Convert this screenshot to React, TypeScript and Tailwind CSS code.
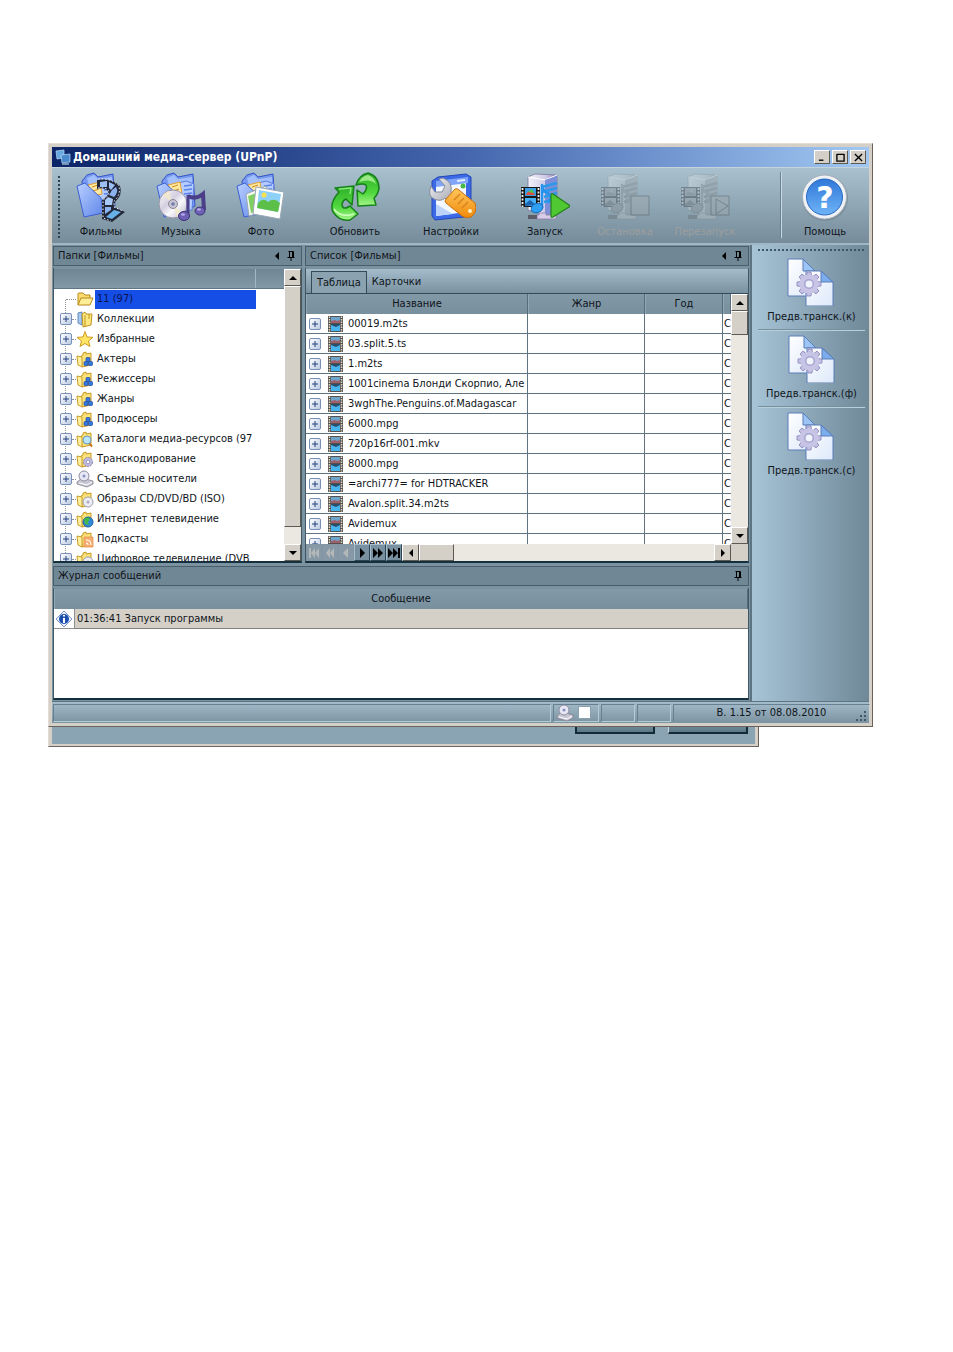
import React from 'react';

type Kind =
  | 'open' | 'collection' | 'star' | 'cubes' | 'search' | 'gear' | 'drive' | 'disc' | 'globe' | 'rss';

const treeItems: { label: string; kind: Kind }[] = [
  { label: '11 (97)', kind: 'open' },
  { label: 'Коллекции', kind: 'collection' },
  { label: 'Избранные', kind: 'star' },
  { label: 'Актеры', kind: 'cubes' },
  { label: 'Режиссеры', kind: 'cubes' },
  { label: 'Жанры', kind: 'cubes' },
  { label: 'Продюсеры', kind: 'cubes' },
  { label: 'Каталоги медиа-ресурсов (97', kind: 'search' },
  { label: 'Транскодирование', kind: 'gear' },
  { label: 'Съемные носители', kind: 'drive' },
  { label: 'Образы CD/DVD/BD (ISO)', kind: 'disc' },
  { label: 'Интернет телевидение', kind: 'globe' },
  { label: 'Подкасты', kind: 'rss' },
  { label: 'Цифровое телевидение (DVB', kind: 'disc' },
];

const files = [
  '00019.m2ts',
  '03.split.5.ts',
  '1.m2ts',
  '1001cinema Блонди Скорпио, Але',
  '3wghThe.Penguins.of.Madagascar',
  '6000.mpg',
  '720p16rf-001.mkv',
  '8000.mpg',
  '=archi777= for HDTRACKER',
  'Avalon.split.34.m2ts',
  'Avidemux',
  'Avidemux',
];

function Gradients() {
  return (
    <svg className="absolute h-0 w-0" aria-hidden="true">
      <defs>
        <linearGradient id="folder" x1="0" y1="0" x2="1" y2="1">
          <stop offset="0" stopColor="#b9d0ff" />
          <stop offset="1" stopColor="#5f86ea" />
        </linearGradient>
        <linearGradient id="green" x1="0" y1="0" x2="0" y2="1">
          <stop offset="0" stopColor="#2fae2a" />
          <stop offset="0.6" stopColor="#4fd83c" />
          <stop offset="1" stopColor="#a6f58c" />
        </linearGradient>
        <linearGradient id="steel" x1="0" y1="0" x2="1" y2="1">
          <stop offset="0" stopColor="#f6f6f8" />
          <stop offset="1" stopColor="#9a9ca8" />
        </linearGradient>
        <linearGradient id="orange" x1="0" y1="0" x2="0" y2="1">
          <stop offset="0" stopColor="#ffc65a" />
          <stop offset="1" stopColor="#f08a0c" />
        </linearGradient>
        <linearGradient id="disc" x1="0" y1="0" x2="1" y2="1">
          <stop offset="0" stopColor="#ffffff" />
          <stop offset="0.4" stopColor="#d4cfe0" />
          <stop offset="0.6" stopColor="#f8f8fc" />
          <stop offset="1" stopColor="#b8b4c8" />
        </linearGradient>
        <linearGradient id="tower" x1="0" y1="0" x2="1" y2="0">
          <stop offset="0" stopColor="#f4f2fa" />
          <stop offset="0.6" stopColor="#cfcbe6" />
          <stop offset="1" stopColor="#8d86bd" />
        </linearGradient>
        <linearGradient id="help" x1="0" y1="0" x2="0" y2="1">
          <stop offset="0" stopColor="#2f78d8" />
          <stop offset="1" stopColor="#6fb4f8" />
        </linearGradient>
        <linearGradient id="sheet" x1="0" y1="0" x2="1" y2="1">
          <stop offset="0" stopColor="#ffffff" />
          <stop offset="1" stopColor="#dce8fa" />
        </linearGradient>
      </defs>
    </svg>
  );
}

function BlueFolder() {
  return (
    <g strokeLinejoin="round">
      <path d="M6 9 L11 3 L18 1 L22 5 L37 2 L39 34 L26 41 L8 44Z" fill="#7799f0" stroke="#3454c4" />
      <path d="M11 6 L18 3 L22 7 L36 5 L37 34 L20 38Z" fill="#a2bffc" />
      <path d="M12 14 L30 9 L38 12 L36 38 L16 40Z" fill="#b4ccff" stroke="#5a7ce4" />
      <path d="M12 13 L24 10 L26 22 L16 24Z" fill="#ffe9a0" stroke="#e0a030" />
      <path d="M16 15 L22 13 M17 19 L23 17" stroke="#d08a20" />
      <path d="M28 14 L36 13 M28 18 L36 17 M28 22 L36 21" stroke="#5a82e8" strokeWidth="1.500" />
      <path d="M1 14 L9 11 L25 26 L27 41 L8 45Z" fill="url(#folder)" stroke="#3f60d0" />
    </g>
  );
}

function FilmsIcon() {
  return (
    <svg viewBox="0 0 50 50" className="size-[50px]" strokeLinejoin="round">
      <BlueFolder />
      <path d="M21 8 Q35 5 44 14 Q47 23 39 30 L38 35 L49 40 L36 50 L26 47 V28 Q34 23 32 19 Q28 15 21 17Z" fill="#22283a" />
      <path d="M24 10 L31 9 V15 L24 15Z" fill="#9cc0f4" />
      <path d="M33 10 L39 13 L35 18 L33 16Z" fill="#9cc0f4" />
      <path d="M40 15 Q43 20 38 25 L33 23 Q35 20 36 18Z" fill="#8cb0ec" />
      <path d="M32 25 L37 27 L36 33 H29 V28Z" fill="#a8c8f8" />
      <path d="M29 35 H35 V38 L29 42Z" fill="#8cb4f0" />
      <path d="M30 45 L38 38 L45 40 L36 47Z" fill="#68b0e8" />
      <path d="M22 7 Q36 6 43 14 Q45 23 38 29 V35 L47 39" fill="none" stroke="#f0f2f8" strokeDasharray="1.500 2" />
      <path d="M22 16 Q30 15 33 19 Q33 24 27 28 V46 L35 49" fill="none" stroke="#f0f2f8" strokeDasharray="1.500 2" />
    </svg>
  );
}

function MusicIcon() {
  return (
    <svg viewBox="0 0 50 50" className="size-[50px]">
      <BlueFolder />
      <circle cx="17" cy="32" r="14" fill="url(#disc)" stroke="#9a96a8" />
      <path d="M17 32 L7 23 A14 14 0 0 1 13 19Z M17 32 L27 42 A14 14 0 0 1 21 45Z" fill="#f3e9c8" opacity=".8" />
      <circle cx="17" cy="32" r="4.500" fill="#c8c4d4" stroke="#8a8698" />
      <circle cx="17" cy="32" r="1.800" fill="#6e7ea8" />
      <path d="M32 24 Q40 28 47 22 L48 38" fill="none" stroke="#4a3f88" strokeWidth="4" />
      <path d="M32 23 L32 43" stroke="#4a3f88" strokeWidth="3" />
      <ellipse cx="28" cy="44" rx="5.500" ry="4.500" fill="#6d5fb4" stroke="#3e3478" />
      <ellipse cx="44" cy="39" rx="5" ry="4" fill="#6d5fb4" stroke="#3e3478" />
      <ellipse cx="27" cy="42.500" rx="2" ry="1.300" fill="#b4a8e8" />
      <ellipse cx="43" cy="37.500" rx="2" ry="1.200" fill="#b4a8e8" />
    </svg>
  );
}

function PhotoIcon() {
  return (
    <svg viewBox="0 0 50 50" className="size-[50px]">
      <BlueFolder />
      <path d="M10 22 L30 14 L34 38 L13 44Z" fill="#f4f6f4" stroke="#98a8b0" />
      <path d="M12 24 L30 18 L32 36 L15 41Z" fill="#7fd060" />
      <path d="M20 15 L48 20 L44 47 L17 42Z" fill="#fff" stroke="#9aa8b4" />
      <path d="M23 18 L45 22 L42 40 L21 36Z" fill="#8fd0f8" />
      <path d="M22 31 Q27 25 32 30 Q38 25 44 31 L42 40 L21 36Z" fill="#5cc048" />
      <circle cx="28" cy="23" r="2.500" fill="#ffe24a" />
    </svg>
  );
}

function RefreshIcon() {
  return (
    <svg viewBox="0 0 50 50" className="size-[50px]" strokeLinejoin="round">
      <path d="M24 14 L5 16 L9 20 Q-1 31 3 40 Q10 50 20 48 L28 42 L20 34 Q12 39 12 32 Q13 28 16 27 L22 33Z" fill="url(#green)" stroke="#16801a" strokeWidth="1.500" />
      <path d="M26 13 Q29 3 38 1 Q49 4 49 17 Q47 24 44 26 L46 33 L28 34 L27 18 L33 22 Q38 17 36 13 Q33 11 26 13Z" fill="url(#green)" stroke="#16801a" strokeWidth="1.500" />
      <path d="M29 10 Q32 4 38 3 Q44 5 46 12 Q40 6 29 10Z" fill="#b4f59c" opacity=".8" />
      <path d="M4 37 Q10 46 24 42" fill="none" stroke="#d0ffc0" strokeWidth="1.500" />
      <path d="M9 17 L21 16 L20 22" fill="none" stroke="#86e878" strokeWidth="1.500" />
    </svg>
  );
}

function SettingsIcon() {
  return (
    <svg viewBox="0 0 50 50" className="size-[50px]" strokeLinejoin="round">
      <path d="M6 9 L12 5 L40 2 L45 5 L45 41 L38 45 L9 48 L6 44Z" fill="#3c6ae6" stroke="#2448b8" />
      <path d="M10 12 L40 8 L40 40 L10 44Z" fill="#f4f8ff" />
      <path d="M10 9 L42 5 L42 11 L10 15Z" fill="#7fa4f8" />
      <path d="M31 9 L39 8" stroke="#e0ecff" strokeWidth="2" />
      <path d="M10 32 L27 42 L10 44Z" fill="#bcd4fa" />
      <circle cx="37" cy="14" r="2.500" fill="#48b848" />
      <path d="M5 14 Q1 24 8 27 Q15 30 19 26 L26 32 L31 26 L25 20 Q27 10 17 6 L13 7 L19 14 L16 20 L9 20Z" fill="url(#steel)" stroke="#868a98" />
      <path d="M20 27 L29 17 Q31 16 33 18 L49 31 Q52 40 45 45 Q40 47 36 44 L20 31 Q18 29 20 27Z" fill="url(#orange)" stroke="#c87010" />
      <path d="M28 28 L34 22 M32 32 L38 26 M36 36 L42 30" stroke="#d88420" strokeWidth="1.500" />
      <circle cx="44" cy="39" r="2" fill="#fff2c8" />
    </svg>
  );
}

function ServerIcon({ mode }: { mode: 'play' | 'stop' | 'restart' }) {
  const live = mode === 'play';
  return (
    <svg viewBox="0 0 50 50" className={live ? 'size-[50px]' : 'size-[50px] opacity-30 grayscale'} strokeLinejoin="round">
      <path d="M8 5 L15 2 L37 3 L37 40 L25 43 L8 38Z" fill="url(#tower)" stroke="#7a76a0" strokeWidth=".8" />
      <path d="M8 5 L25 8 L37 3" fill="none" stroke="#fff" />
      <path d="M25 8 L37 4 L37 40 L25 43Z" fill={live ? '#7d8fd8' : '#a0a0a0'} />
      <path d="M22 15 L37 11 M22 20 L37 16 M24 25 L37 21 M24 30 L37 26" stroke={live ? '#2c98e8' : '#777'} strokeWidth="2.500" />
      <rect x="1" y="15" width="19" height="20" fill="#181818" />
      <path d="M2.500 16 V35 M18.500 16 V35" stroke="#f4f4f4" strokeWidth="1.800" strokeDasharray="2 1.500" />
      <rect x="5" y="16" width="11" height="8" fill="#3a9ee8" />
      <rect x="5" y="26" width="11" height="8" fill="#48b0f4" />
      <path d="M6 23 Q8 18 12 19 L15 23Z" fill="#e05040" />
      <path d="M8 20 L12 17 L14 21Z" fill="#4cc850" />
      <path d="M5 32 L10 28 L16 33 L5 34Z" fill="#1c64b0" />
      <path d="M22 36 V13 Q23 20 29 22 Q32 26 28 31" fill="none" stroke="#2494ee" strokeWidth="2.500" />
      <ellipse cx="17" cy="36" rx="6" ry="4.500" fill="#30a0f4" stroke="#1870c0" transform="rotate(-20 17 36)" />
      <path d="M19 41 H26 V43 H36 V47 H17 V43 H19Z" fill="#d8cce8" stroke="#8c80a8" strokeWidth=".8" />
      <rect x="8" y="43" width="9" height="4" fill="#5c5c68" />
      {mode === 'play' && <path d="M31 23 Q31 21 33 22 L49 33 Q50 34 49 35 L33 45 Q31 46 31 44Z" fill="#50c832" stroke="#24801c" strokeWidth="1.200" />}
      {mode === 'stop' && <rect x="31" y="24" width="18" height="19" fill="#a8a8a8" stroke="#333" />}
      {mode === 'restart' && <path d="M31 24 H49 V43 H31Z M36 27 L48 34 L36 42Z" fill="#a8a8a8" stroke="#333" />}
    </svg>
  );
}

function HelpIcon() {
  return (
    <svg viewBox="0 0 50 50" className="size-[50px]">
      <circle cx="25" cy="26" r="23" fill="#6f8290" opacity=".6" />
      <circle cx="24.500" cy="25" r="22" fill="#eef2f6" stroke="#a8b0b8" />
      <circle cx="24.500" cy="25" r="18" fill="url(#help)" stroke="#2a68c0" />
      <text x="25" y="36" textAnchor="middle" className="fill-white font-['DejaVu_Sans'] text-[30px] font-bold">?</text>
    </svg>
  );
}

function DocsIcon() {
  return (
    <svg viewBox="0 0 48 48" className="size-12" strokeLinejoin="round">
      <path d="M1 1 H16 L28 13 V38 H1Z" fill="url(#sheet)" stroke="#5a7cb8" />
      <path d="M16 1 V13 H28Z" fill="#9cc4f4" stroke="#5a7cb8" />
      <path d="M19 13 H34 L46 24 V48 H19Z" fill="url(#sheet)" stroke="#5a7cb8" />
      <path d="M34 13 V24 H46Z" fill="#7cacec" stroke="#5a7cb8" />
      <g transform="translate(22 26)">
        {[0, 45, 90, 135, 180, 225, 270, 315].map((a) => (
          <path key={a} d="M-2.500 -8 L-2 -12 H2 L2.500 -8Z" fill="#c4c0e4" stroke="#8884b8" strokeWidth=".8" transform={`rotate(${a})`} />
        ))}
        <circle r="9.500" fill="#c8c4e6" />
        <circle r="5" fill="#a8a4d0" />
        <circle r="3.500" fill="#f0f4fc" />
      </g>
    </svg>
  );
}

function DriveIcon() {
  return (
    <svg viewBox="0 0 18 18" className="size-[18px] shrink-0">
      <path d="M1 12 L6 8 L17 11 L17 14 L11 17 L1 14Z" fill="#c8c8d4" stroke="#80808e" strokeWidth=".8" />
      <circle cx="8" cy="6" r="5" fill="#e8e8f4" stroke="#8c8ca0" />
      <circle cx="8" cy="6" r="1.500" fill="#8890c0" />
      <path d="M3 13 L11 15 L16 12" fill="none" stroke="#fff" />
    </svg>
  );
}

function TreeIcon({ kind }: { kind: Kind }) {
  if (kind === 'drive') return <DriveIcon />;
  if (kind === 'star')
    return (
      <svg viewBox="0 0 18 18" className="size-[18px] shrink-0">
        <path d="M9 1.500 L11 7 L17 7.300 L12.500 11 L14 16.500 L9 13.500 L4 16.500 L5.500 11 L1 7.300 L7 7Z" fill="#ffe466" stroke="#d09a20" strokeLinejoin="round" />
      </svg>
    );
  if (kind === 'open')
    return (
      <svg viewBox="0 0 18 18" className="size-[18px] shrink-0">
        <path d="M2 15 V4 Q2 3 3 3 H7 L9 5 H14 V8" fill="#f8dc70" stroke="#b88a18" />
        <path d="M2 15 L5 8 H17 L14 15Z" fill="#ffee98" stroke="#b88a18" strokeLinejoin="round" />
      </svg>
    );
  if (kind === 'collection')
    return (
      <svg viewBox="0 0 18 18" className="size-[18px] shrink-0" strokeLinejoin="round">
        <path d="M2 3 L6 2 V15 L2 13Z" fill="#a8c8f0" stroke="#6088b8" />
        <path d="M6 4 L9 2 L10 4 H16 L15 15 L7 17Z" fill="#ffe880" stroke="#c09420" />
        <path d="M9 5 V16 M13 4 V9" stroke="#c09420" />
      </svg>
    );
  return (
    <svg viewBox="0 0 18 18" className="size-[18px] shrink-0" strokeLinejoin="round">
      <path d="M5 6 L7 5 V3 L10 2 V4 L15 3 V15 L6 17Z" fill="#fbe27a" stroke="#c89c28" />
      <path d="M1 6 L6 7 V17 L2 15Z" fill="#fff0a0" stroke="#c89c28" />
      {kind === 'cubes' && (
        <g fill="#3478e0" stroke="#1848a0" strokeWidth=".7">
          <rect x="10" y="7.500" width="4" height="4" rx="1" />
          <rect x="8" y="11.500" width="4" height="4" rx="1" />
          <rect x="12.500" y="11.500" width="4" height="4" rx="1" />
        </g>
      )}
      {kind === 'search' && (
        <g>
          <path d="M13 13 L16 16.500" stroke="#c87820" strokeWidth="2" />
          <circle cx="11" cy="10" r="4" fill="#b8e4fc" stroke="#6898c0" />
        </g>
      )}
      {kind === 'gear' && (
        <g>
          <circle cx="12" cy="12" r="4.500" fill="#c0bce0" stroke="#8480b4" strokeDasharray="2 1" />
          <circle cx="12" cy="12" r="1.800" fill="#fff" stroke="#8480b4" strokeWidth=".7" />
        </g>
      )}
      {kind === 'disc' && (
        <g>
          <circle cx="12" cy="12" r="5" fill="#ececf4" stroke="#a0a0b0" />
          <circle cx="12" cy="12" r="1.500" fill="#b0a8c8" />
        </g>
      )}
      {kind === 'globe' && (
        <g>
          <circle cx="12" cy="12" r="5" fill="#3088d8" stroke="#1c5c98" />
          <path d="M8 9 Q12 6 14 9 L12 12 L13 15 L9 14Z" fill="#44b848" />
        </g>
      )}
      {kind === 'rss' && (
        <g>
          <rect x="8" y="7" width="9" height="10" fill="#f8ac70" stroke="#e08c48" strokeWidth=".7" />
          <path d="M10 10 Q15 10 15 15 M10 13 Q12 13 12 15" fill="none" stroke="#fff" strokeWidth="1.200" />
        </g>
      )}
    </svg>
  );
}

function FilmFileIcon() {
  return (
    <svg viewBox="0 0 15 16" className="h-4 w-[15px] shrink-0">
      <rect width="15" height="16" fill="#54504e" />
      <path d="M1.500 0.500 V16 M13.500 0.500 V16" stroke="#e4dcc8" strokeWidth="1.500" strokeDasharray="1.500 1" />
      <rect x="3" y="1" width="9" height="6" fill="#6ca4cc" />
      <path d="M3 7 V5 L7 4 L9 5 L12 4 V7Z" fill="#a0606c" />
      <rect x="3" y="8" width="9" height="7" fill="#48b4f0" />
      <path d="M3 8 H12 V9 L8 11 L3 9Z" fill="#28506c" />
    </svg>
  );
}

function Expander({ label }: { label: string }) {
  return (
    <button aria-label={label} className="relative flex size-3 shrink-0 items-center justify-center rounded-[2px] border border-[#7890b8] bg-gradient-to-br from-white to-[#bccce4]">
      <svg viewBox="0 0 6 6" className="size-[6px]">
        <path d="M3 0 V6 M0 3 H6" stroke="#24407c" />
      </svg>
    </button>
  );
}

function Arrow({ d }: { d: string }) {
  return (
    <svg viewBox="0 0 8 8" className="size-2">
      <path d={d} fill="#000" />
    </svg>
  );
}

const UP = 'M4 2 L8 6 H0Z';
const DOWN = 'M0 2 H8 L4 6Z';
const LEFT = 'M6 0 V8 L2 4Z';
const RIGHT = 'M2 0 V8 L6 4Z';

const raised = 'border border-t-white border-l-white border-r-[#5c5852] border-b-[#5c5852] bg-[#d4d0c8]';
const track = 'bg-[#ebe8e2]';
const frame = 'border-x border-y-2 border-t-[#7b92a0] border-r-[#405866] border-b-[#14303e] border-l-[#405866]';

function ScrollButton({ d, label }: { d: string; label: string }) {
  return (
    <button aria-label={label} className={`flex size-[17px] shrink-0 items-center justify-center ${raised}`}>
      <Arrow d={d} />
    </button>
  );
}

function PanelHeader({ title, arrow = true }: { title: string; arrow?: boolean }) {
  return (
    <div className="flex h-5 shrink-0 items-center justify-between border border-[#485e6c] bg-[#708896] pr-1.5 pl-1">
      <h2>{title}</h2>
      <div className="flex items-center gap-1.5">
        {arrow && (
          <button aria-label="Свернуть"><Arrow d={LEFT} /></button>
        )}
        <button aria-label="Закрепить">
          <svg viewBox="0 0 8 10" className="h-[10px] w-2">
            <path d="M1.500 0.500 H6.500 M2.500 0.500 V6.500 M5.500 0.500 V6.500 M0.500 6.500 H7.500 M4 6.500 V10 M6.500 0.500 V6.500" stroke="#000" fill="none" />
          </svg>
        </button>
      </div>
    </div>
  );
}

function ToolButton({ label, wide, disabled, children }: { label: string; wide?: boolean; disabled?: boolean; children: React.ReactNode }) {
  return (
    <button disabled={disabled} className={`flex shrink-0 flex-col items-center gap-[2px] ${wide ? 'w-24' : 'w-20'} ${disabled ? 'text-[#9c9f9d]' : ''}`}>
      {children}
      <span className="leading-4">{label}</span>
    </button>
  );
}

function WindowButton({ label, d }: { label: string; d: string }) {
  return (
    <button aria-label={label} className={`flex h-[14px] w-4 items-center justify-center ${raised}`}>
      <svg viewBox="0 0 10 10" className="size-[9px]">
        <path d={d} stroke="#000" strokeWidth="1.500" fill="none" />
      </svg>
    </button>
  );
}

function NavButton({ d, label, off }: { d: string; label: string; off?: boolean }) {
  return (
    <button aria-label={label} disabled={off} className={`flex h-[17px] w-4 items-center justify-center border ${off ? 'border-[#8296a4] bg-[#8799a6]' : 'border-t-[#a4bccc] border-r-[#2c4454] border-b-[#2c4454] border-l-[#a4bccc] bg-[#7890a0]'}`}>
      <svg viewBox="0 0 12 10" className="h-[10px] w-3">
        <path d={d} fill={off ? '#b4b8b8' : '#000'} />
      </svg>
    </button>
  );
}

const headCell = 'border-r border-r-[#566c7a] border-l border-l-[#93a8b6] bg-gradient-to-b from-[#8299a8] to-[#788f9e] p-0 text-center font-normal';
const cell = 'border-r border-b border-[#5f7480] bg-white p-0';
const statusCell = 'h-[18px] border border-t-[#66808f] border-r-[#b4ccd8] border-b-[#b4ccd8] border-l-[#66808f]';

export default function App() {
  return (
    <main className="min-h-screen bg-white pt-[143px] pr-20 pl-12 font-['DejaVu_Sans_Condensed','DejaVu_Sans',sans-serif] text-[11px] leading-4 text-[#10151a]">
      <Gradients />
      <section className="border border-t-[#e4dcd4] border-r-[#6c625c] border-b-[#6c625c] border-l-[#e4dcd4] bg-[#d4d0c8] p-[3px]">
        <header className="flex h-5 items-center justify-between bg-gradient-to-r from-[#0c2468] via-[#4465ad] to-[#a2c8f2] px-[3px]">
          <div className="flex items-center gap-[2px]">
            <svg viewBox="0 0 16 16" className="size-4">
              <path d="M1 2 L9 1 V9 L2 10Z" fill="#68a8e0" stroke="#b8dcf8" strokeWidth=".7" />
              <path d="M6 6 L15 5 V13 L7 14Z" fill="#4c88cc" stroke="#b8dcf8" strokeWidth=".7" />
              <path d="M7 15 H14" stroke="#9ab4cc" strokeWidth="1.500" />
            </svg>
            <h1 className="text-[12px] font-bold text-white">Домашний медиа-сервер (UPnP)</h1>
          </div>
          <div className="flex gap-[2px]">
            <WindowButton label="Свернуть окно" d="M1 8 H6" />
            <WindowButton label="Развернуть окно" d="M1 1.500 H9 M1 1 V9 H9 V1" />
            <WindowButton label="Закрыть окно" d="M1 1 L9 9 M9 1 L1 9" />
          </div>
        </header>

        <div className="border-t border-[#c4d4dc] bg-[#7b92a0]">
          <nav className="flex h-[77px] items-start border-b-2 border-[#a0b8c6] bg-gradient-to-b from-[#a9c1cf] to-[#768c9b] pt-1">
            <div className="mt-1 mr-[1px] ml-1.5 h-16 w-[2px] shrink-0 bg-[repeating-linear-gradient(to_bottom,#2e4350_0_2px,transparent_2px_4px)]" />
            <ToolButton label="Фильмы"><FilmsIcon /></ToolButton>
            <ToolButton label="Музыка"><MusicIcon /></ToolButton>
            <ToolButton label="Фото"><PhotoIcon /></ToolButton>
            <div className="w-1.5" />
            <ToolButton label="Обновить" wide><RefreshIcon /></ToolButton>
            <ToolButton label="Настройки" wide><SettingsIcon /></ToolButton>
            <div className="w-1.5" />
            <ToolButton label="Запуск"><ServerIcon mode="play" /></ToolButton>
            <ToolButton label="Остановка" disabled><ServerIcon mode="stop" /></ToolButton>
            <ToolButton label="Перезапуск" disabled><ServerIcon mode="restart" /></ToolButton>
            <div className="ml-auto h-[66px] w-[2px] border-r border-l border-r-[#c8d8e0] border-l-[#6c8290]" />
            <div className="mr-1 ml-[3px]"><ToolButton label="Помощь"><HelpIcon /></ToolButton></div>
          </nav>

          <div className="flex">
            <div className="flex min-w-0 flex-1 flex-col gap-[3px] border-r-2 border-[#5d7482] p-[1px]">
              <div className="flex gap-[3px]">
                <section className="flex w-[249px] shrink-0 flex-col gap-[1px]">
                  <PanelHeader title="Папки [Фильмы]" />
                  <div className={`flex h-[296px] bg-white ${frame}`}>
                    <div className="min-w-0 flex-1 overflow-hidden">
                      <div className="flex h-5 border-b border-[#5f7684] bg-gradient-to-b from-[#6f8593] to-[#8299a8]">
                        <div className="w-[202px] border-r border-[#a2b6c2]" />
                      </div>
                      <ul className="relative w-[202px] overflow-hidden before:absolute before:top-[11px] before:bottom-0 before:left-[11px] before:border-l before:border-dotted before:border-[#90969c]">
                        {treeItems.map((item, i) => (
                          <li key={item.label} className="flex h-5 items-center pl-1.5">
                            {i ? <Expander label={`Раскрыть: ${item.label}`} /> : <span className="w-3" />}
                            <span className={i ? 'w-1 shrink-0 border-t border-dotted border-[#90969c]' : '-ml-1.5 w-[10px] shrink-0 border-t border-dotted border-[#90969c]'} />
                            <TreeIcon kind={item.kind} />
                            <span className={i ? 'pl-[3px] whitespace-nowrap' : 'ml-[1px] flex h-[19px] flex-1 items-center bg-[#144ee6] pl-[2px] text-[#0c1450]'}>{item.label}</span>
                          </li>
                        ))}
                      </ul>
                    </div>
                    <div className={`flex w-[17px] flex-col ${track}`}>
                      <ScrollButton d={UP} label="Прокрутить папки вверх" />
                      <div className={`h-[241px] ${raised}`} />
                      <div className="flex-1" />
                      <ScrollButton d={DOWN} label="Прокрутить папки вниз" />
                    </div>
                  </div>
                </section>

                <section className="flex min-w-0 flex-1 flex-col gap-[1px]">
                  <PanelHeader title="Список [Фильмы]" />
                  <div className={`flex h-[296px] flex-col ${frame}`}>
                    <div role="tablist" className="flex h-[25px] shrink-0 items-end border-b border-[#344c5a] bg-gradient-to-b from-[#a4bccb] to-[#7a91a0] pl-[5px]">
                      <button role="tab" aria-selected="true" className="h-[22px] border border-b-0 border-[#344c5a] bg-[#8ba2b1] px-[5px]">Таблица</button>
                      <button role="tab" aria-selected="false" className="h-[22px] px-[5px]">Карточки</button>
                    </div>
                    <div className="flex min-h-0 flex-1 bg-white">
                      <div className="min-w-0 flex-1 overflow-hidden">
                        <table className="w-full table-fixed border-separate border-spacing-0">
                          <colgroup>
                            <col />
                            <col className="w-[117px]" />
                            <col className="w-[78px]" />
                            <col className="w-2" />
                          </colgroup>
                          <thead>
                            <tr className="h-5">
                              <th className={headCell}>Название</th>
                              <th className={headCell}>Жанр</th>
                              <th className={headCell}>Год</th>
                              <th className={headCell} />
                            </tr>
                          </thead>
                          <tbody>
                            {files.map((f, i) => (
                              <tr key={i} className="h-5">
                                <td className={cell}>
                                  <div className="flex h-[19px] items-center overflow-hidden pl-[3px] whitespace-nowrap">
                                    <Expander label={`Раскрыть: ${f}`} />
                                    <span className="w-[7px] shrink-0" />
                                    <FilmFileIcon />
                                    <span className="ml-[5px]">{f}</span>
                                  </div>
                                </td>
                                <td className={cell} />
                                <td className={cell} />
                                <td className="border-b border-[#5f7480] p-0"><div className="h-[19px] w-2 overflow-hidden pt-[2px] pl-[1px]">С</div></td>
                              </tr>
                            ))}
                          </tbody>
                        </table>
                      </div>
                      <div className={`flex w-[17px] flex-col ${track}`}>
                        <ScrollButton d={UP} label="Прокрутить список вверх" />
                        <div className={`h-6 ${raised}`} />
                        <div className="flex-1" />
                        <ScrollButton d={DOWN} label="Прокрутить список вниз" />
                      </div>
                    </div>
                    <div className={`flex h-[17px] shrink-0 ${track}`}>
                      <NavButton off label="Первая запись" d="M1 0 H3 V10 H1Z M7 0 V10 L3 5Z M11 0 V10 L7 5Z" />
                      <NavButton off label="Страница назад" d="M6 0 V10 L2 5Z M10 0 V10 L6 5Z" />
                      <NavButton off label="Предыдущая запись" d="M8 0 V10 L3 5Z" />
                      <NavButton label="Следующая запись" d="M4 0 V10 L9 5Z" />
                      <NavButton label="Страница вперед" d="M1 0 V10 L6 5Z M6 0 V10 L11 5Z" />
                      <NavButton label="Последняя запись" d="M0 0 V10 L5 5Z M5 0 V10 L10 5Z M10 0 H12 V10 H10Z" />
                      <ScrollButton d={LEFT} label="Прокрутить влево" />
                      <div className={`w-[35px] ${raised}`} />
                      <div className="flex-1" />
                      <ScrollButton d={RIGHT} label="Прокрутить вправо" />
                      <div className="w-[17px] bg-[#d4d0c8]" />
                    </div>
                  </div>
                </section>
              </div>

              <section className="flex flex-col gap-[1px]">
                <PanelHeader title="Журнал сообщений" arrow={false} />
                <div className={`h-[113px] bg-white ${frame}`}>
                  <table className="w-full border-separate border-spacing-0">
                    <thead>
                      <tr className="h-5"><th colSpan={2} className={headCell}>Сообщение</th></tr>
                    </thead>
                    <tbody>
                      <tr className="h-5">
                        <td className="w-[21px] border-r border-b border-[#909090] bg-white p-0">
                          <svg viewBox="0 0 16 16" className="mx-auto size-4">
                            <path d="M8 0 L16 8 L8 16 L0 8Z" fill="#e8f0fc" stroke="#7c98c8" />
                            <circle cx="8" cy="8" r="5" fill="#1c50b0" />
                            <path d="M8 4 V5.500 M8 7 V12" stroke="#fff" strokeWidth="2" />
                          </svg>
                        </td>
                        <td className="border-b border-[#808080] bg-[#d4d0c8] p-0 pl-[2px]">01:36:41 Запуск программы</td>
                      </tr>
                    </tbody>
                  </table>
                </div>
              </section>
            </div>

            <aside className="flex w-[117px] shrink-0 flex-col items-center border-l-2 border-[#a8c4d4] bg-gradient-to-r from-[#a6c3d6] to-[#708999] px-1 pt-1">
              <div className="mb-[7px] h-[2px] w-full bg-[repeating-linear-gradient(to_right,#3e5564_0_2px,transparent_2px_4px)]" />
              {['Предв.транск.(к)', 'Предв.транск.(ф)', 'Предв.транск.(с)'].map((t, i) => (
                <div key={t} className="flex h-[77px] w-full flex-col items-center">
                  <button className="flex flex-col items-center gap-[3px] whitespace-nowrap">
                    <DocsIcon />
                    <span>{t}</span>
                  </button>
                  {i < 2 && <div className="mt-1 h-[2px] w-full border-t border-b border-t-[#7690a0] border-b-[#b8d0dc]" />}
                </div>
              ))}
            </aside>
          </div>

          <footer className="flex h-[22px] items-center gap-[2px] border-t border-[#5d7482] bg-gradient-to-b from-[#a4bccb] to-[#7b92a1] px-[1px]">
            <div className={`flex-1 ${statusCell}`} />
            <div className={`flex w-[46px] items-center gap-1 pl-[2px] ${statusCell}`}>
              <DriveIcon />
              <input type="checkbox" aria-label="Привод" className="size-[13px] appearance-none border border-[#8aa0ac] bg-white" />
            </div>
            <div className={`w-[34px] ${statusCell}`} />
            <div className={`w-[34px] ${statusCell}`} />
            <div className="flex h-[18px] w-[197px] items-center justify-center border border-t-[#66808f] border-r-transparent border-b-transparent border-l-[#66808f]">
              В. 1.15 от 08.08.2010
            </div>
            <svg viewBox="0 0 12 12" className="-ml-4 size-3 self-end">
              <path d="M8 0 h2 v2 h-2z M4 4 h2 v2 h-2z M8 4 h2 v2 h-2z M0 8 h2 v2 h-2z M4 8 h2 v2 h-2z M8 8 h2 v2 h-2z" fill="#425866" />
            </svg>
          </footer>
        </div>
      </section>

      <section className="mr-[114px] h-[20px] border border-t-0 border-r-[#6c625c] border-b-[#6c625c] border-l-[#e4dcd4] bg-[#d4d0c8] pr-[3px] pb-[2px] pl-[3px]">
        <div className="flex h-full items-start justify-end gap-[13px] bg-[#8ba4b4] pr-[7px]">
          <div className="h-[7px] w-20 border-r-2 border-b-2 border-l-2 border-r-[#142a38] border-b-[#142a38] border-l-[#142a38] bg-gradient-to-b from-[#6c8695] to-[#5c7888]" />
          <div className="h-[7px] w-20 border-r-2 border-b-2 border-l border-r-[#142a38] border-b-[#142a38] border-l-[#c8d8e0] bg-gradient-to-b from-[#6c8695] to-[#5c7888]" />
        </div>
      </section>
    </main>
  );
}
